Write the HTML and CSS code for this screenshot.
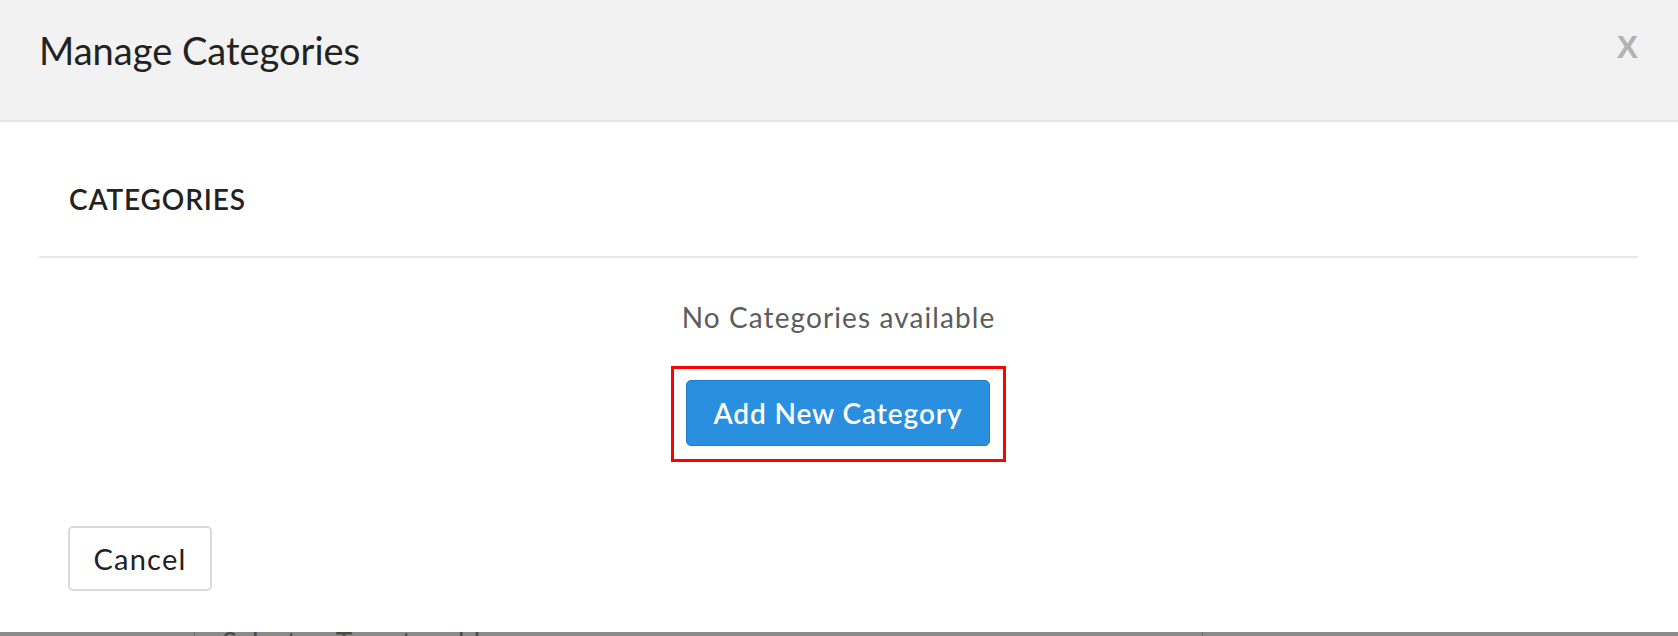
FILE: index.html
```html
<!DOCTYPE html>
<html lang="en">
<head>
<meta charset="utf-8">
<title>Manage Categories</title>
<link rel="stylesheet" href="styles.css">
</head>
<body>
<div class="modal">
  <header class="modal-header">
    <h1 class="modal-title">Manage Categories</h1>
    <span class="modal-close">X</span>
  </header>
  <section class="modal-body">
    <h2 class="section-title">CATEGORIES</h2>
    <div class="divider"></div>
    <div class="empty">
      <p class="empty-text">No Categories available</p>
      <div class="highlight">
        <button class="btn-primary" type="button">Add New Category</button>
      </div>
    </div>
  </section>
  <footer class="modal-footer">
    <button class="btn-default" type="button">Cancel</button>
  </footer>
</div>
<div class="backdrop">
  <div class="backdrop-input">
    <span class="backdrop-text">Select or Type to add</span>
    <span class="backdrop-caret">⌄</span>
  </div>
</div>
</body>
</html>
```

FILE: styles.css
```css
* { box-sizing: border-box; }
html, body {
  margin: 0;
  padding: 0;
  height: 636px;
  overflow: hidden;
  background: #ffffff;
  font-family: "Lato", "Open Sans", sans-serif;
}
.modal {
  background: #ffffff;
  height: 632px;
}
.modal-header {
  height: 122px;
  background: #f2f2f2;
  border-bottom: 2px solid #e6e6e6;
  display: flex;
  justify-content: space-between;
  align-items: flex-start;
  padding: 31px 40px 0 39px;
}
.modal-title {
  margin: 0;
  font-size: 38px;
  line-height: 38px;
  font-weight: 400;
  color: #222222;
}
.modal-close {
  font-family: "Liberation Sans", Arial, sans-serif;
  font-weight: 700;
  font-size: 32px;
  line-height: 32px;
  color: #b3b3b3;
}
.modal-body {
  padding: 0 40px 0 39px;
}
.section-title {
  margin: 0;
  padding: 63px 0 43px 30px;
  font-size: 28px;
  line-height: 28px;
  font-weight: 600;
  letter-spacing: 0.85px;
  color: #222222;
}
.divider {
  height: 2px;
  background: #e8e8e8;
}
.empty {
  display: flex;
  flex-direction: column;
  align-items: center;
}
.empty-text {
  margin: 45px 0 0;
  font-size: 28px;
  line-height: 28px;
  letter-spacing: 1.1px;
  color: #5c5c5c;
}
.highlight {
  margin-top: 35px;
  border: 3px solid #ff0000;
  padding: 11px 13px 13px 12px;
}
.btn-primary {
  display: block;
  width: 304px;
  height: 66px;
  background: #2b8fe0;
  border: 1px solid #1f7cc9;
  border-radius: 5px;
  color: #ffffff;
  font-family: "Lato", "Open Sans", sans-serif;
  font-size: 28px;
  font-weight: 600;
  letter-spacing: 0.9px;
  padding: 0;
}
.modal-footer {
  padding: 64px 0 0 68px;
}
.btn-default {
  display: block;
  width: 144px;
  height: 65px;
  background: #ffffff;
  border: 2px solid #dadada;
  border-radius: 5px;
  color: #222222;
  font-family: "Lato", "Open Sans", sans-serif;
  font-size: 29px;
  font-weight: 400;
  letter-spacing: 1.2px;
  padding: 0;
}
.backdrop {
  height: 4px;
  overflow: hidden;
  background: #8a8a8a;
  display: flex;
}
.backdrop-input {
  margin-left: 194px;
  width: 1009px;
  height: 60px;
  margin-top: -4px;
  border-left: 1px solid #6a6a6a;
  border-right: 1px solid #6a6a6a;
  display: flex;
  justify-content: space-between;
  padding: 0 20px 0 27px;
  font-size: 28px;
  line-height: 28px;
  color: #4a4a4a;
}
```
